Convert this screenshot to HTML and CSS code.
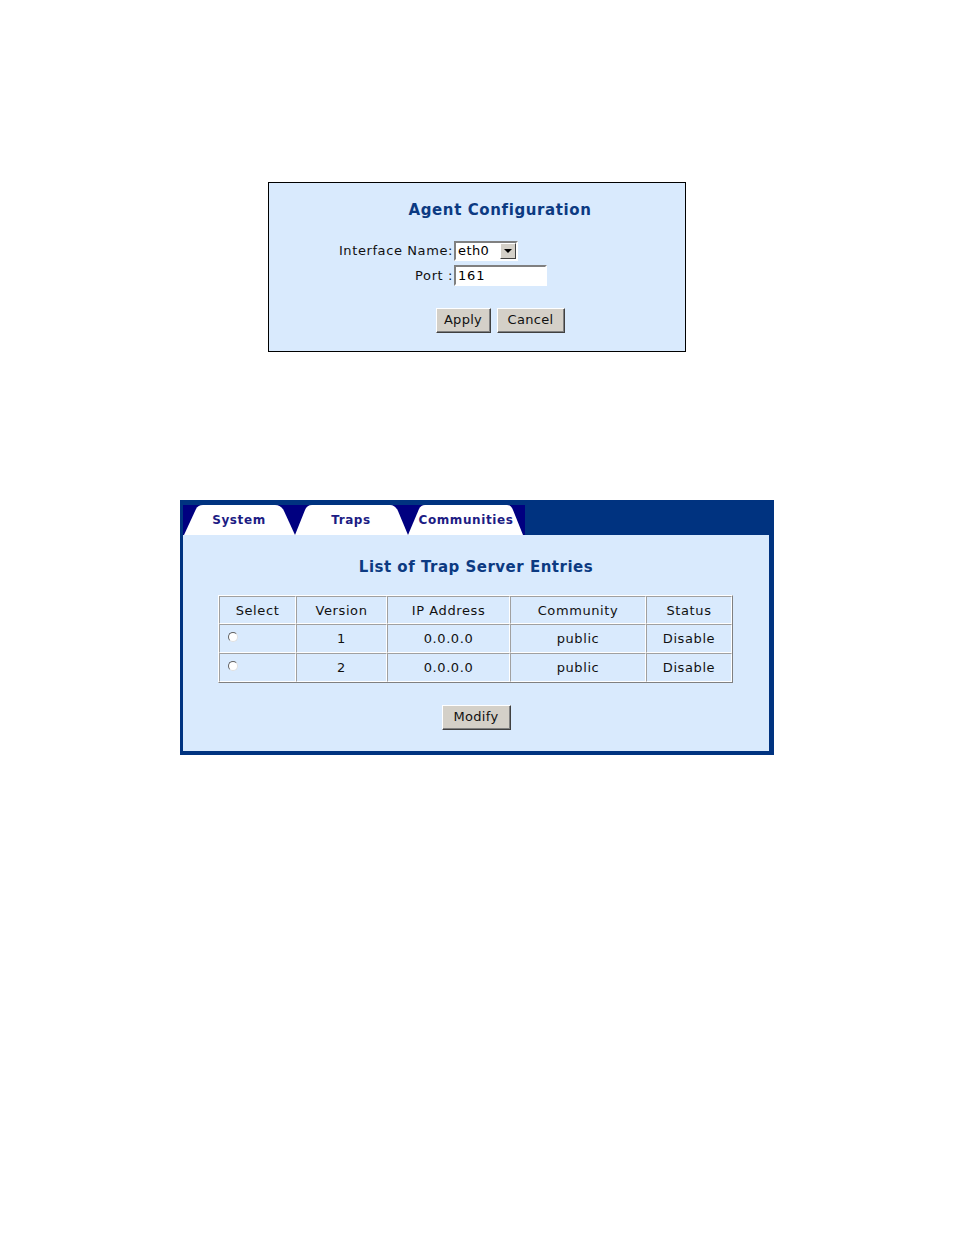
FILE: index.html
```html
<!DOCTYPE html>
<html>
<head>
<meta charset="utf-8">
<link rel="stylesheet" href="styles.css">
</head>
<body>
<div class="agent">
  <div class="agent-inner">
    <div class="agent-title">Agent Configuration</div>
    <div class="form-grid">
      <div class="lbl">Interface Name:</div>
      <div class="sel"><span class="sel-val">eth0</span><span class="sel-btn"><span class="tri"></span></span></div>
      <div class="lbl">Port :</div>
      <div class="inp">161</div>
    </div>
    <div class="btn-row">
      <div class="btn btn-apply">Apply</div>
      <div class="btn btn-cancel">Cancel</div>
    </div>
  </div>
</div>

<div class="frame">
  <div class="tabbar">
    <svg class="tabs" width="342" height="30" viewBox="0 0 342 30">
      <rect x="0" y="0" width="342" height="30" fill="#000080"/>
      <path d="M1,30 L13,4 Q15,0 20,0 L92,0 Q98,0 101,6 L112,30 Z" fill="#ffffff"/>
      <path d="M112,30 L122,5 Q124,0 129,0 L207,0 Q212,0 215,6 L225,30 Z" fill="#ffffff"/>
      <path d="M225,30 L236,4 Q238,0 242,0 L324,0 Q328,0 330,5 L340,30 Z" fill="#ffffff"/>
      <text class="tab-text" x="56" y="19" text-anchor="middle">System</text>
      <text class="tab-text" x="168" y="19" text-anchor="middle">Traps</text>
      <text class="tab-text" x="283" y="19" text-anchor="middle">Communities</text>
    </svg>
  </div>
  <div class="content">
    <div class="list-title">List of Trap Server Entries</div>
    <table class="grid">
      <tr>
        <th class="c1">Select</th><th class="c2">Version</th><th class="c3">IP Address</th><th class="c4">Community</th><th class="c5">Status</th>
      </tr>
      <tr>
        <td class="radio-cell"><span class="radio"></span></td><td>1</td><td>0.0.0.0</td><td>public</td><td>Disable</td>
      </tr>
      <tr>
        <td class="radio-cell"><span class="radio"></span></td><td>2</td><td>0.0.0.0</td><td>public</td><td>Disable</td>
      </tr>
    </table>
    <div class="modify-row"><div class="btn btn-modify">Modify</div></div>
  </div>
</div>
</body>
</html>
```

FILE: styles.css
```css
html, body {
  margin: 0;
  padding: 0;
  background: #ffffff;
}
body {
  font-family: "DejaVu Sans", Verdana, sans-serif;
  font-size: 13px;
  color: #000;
  padding-top: 182px;
  padding-bottom: 100px;
}

/* ---------- Agent Configuration ---------- */
.agent {
  margin-left: 268px;
  width: 416px;
  height: 168px;
  border: 1px solid #000;
  background: #d9eafd;
  box-sizing: content-box;
}
.agent-inner {
  margin-left: 60px;
  width: 342px;
}
.agent-title {
  font-weight: bold;
  font-size: 15px;
  letter-spacing: 0.6px;
  color: #0c3a82;
  text-align: center;
  padding-top: 18px;
  height: 18px;
  line-height: 18px;
}
.form-grid {
  display: grid;
  grid-template-columns: 125px auto;
  row-gap: 4px;
  margin-top: 22px;
  align-items: center;
}
.lbl {
  text-align: right;
  white-space: nowrap;
  font-size: 13px;
  line-height: 20px;
  padding-right: 1px;
  letter-spacing: 0.6px;
  color: #111;
}
.sel {
  width: 64px;
  height: 20px;
  box-sizing: border-box;
  border: 2px solid;
  border-color: #808080 #ffffff #ffffff #808080;
  background: #fff;
  display: flex;
  align-items: stretch;
  outline: 1px solid #d9eafd;
}
.sel-val {
  flex: 1;
  line-height: 16px;
  padding-left: 2px;
  font-size: 13px;
  letter-spacing: 0.4px;
}
.sel-btn {
  width: 16px;
  background: #d4d0c8;
  box-sizing: border-box;
  border: 1px solid;
  border-color: #ffffff #404040 #404040 #ffffff;
  display: flex;
  align-items: center;
  justify-content: center;
}
.tri {
  width: 0;
  height: 0;
  border-left: 4px solid transparent;
  border-right: 4px solid transparent;
  border-top: 4px solid #000;
}
.inp {
  width: 93px;
  height: 21px;
  box-sizing: border-box;
  border: 2px solid;
  border-color: #808080 #ffffff #ffffff #808080;
  background: #fff;
  line-height: 17px;
  padding-left: 2px;
  font-size: 13px;
  letter-spacing: 0.8px;
}
.btn-row {
  display: flex;
  justify-content: center;
  gap: 6px;
  margin-top: 22px;
}
.btn {
  height: 25px;
  box-sizing: border-box;
  background: #d4d0c8;
  border: 1px solid;
  border-color: #ffffff #404040 #404040 #ffffff;
  box-shadow: inset -1px -1px 0 #808080;
  text-align: center;
  line-height: 22px;
  font-size: 13px;
  letter-spacing: 0.3px;
  color: #111;
}
.btn-apply { width: 55px; }
.btn-cancel { width: 68px; }
.btn-modify { width: 69px; }

/* ---------- Trap server frame ---------- */
.frame {
  margin-top: 148px;
  margin-left: 180px;
  width: 594px;
  box-sizing: border-box;
  background: #003380;
  padding: 5px 5px 4px 3px;
}
.tabbar {
  height: 30px;
  display: flex;
}
.tabs {
  display: block;
}
.tab-text {
  font-family: "DejaVu Sans", Verdana, sans-serif;
  font-size: 12px;
  font-weight: bold;
  letter-spacing: 0.6px;
  fill: #1c1c84;
}
.content {
  background: #d9eafd;
  height: 216px;
  box-sizing: border-box;
  padding-top: 23px;
}
.list-title {
  font-weight: bold;
  font-size: 15px;
  letter-spacing: 0.5px;
  color: #0c3a82;
  text-align: center;
  line-height: 18px;
  height: 18px;
}
.grid {
  margin: 19px 0 0 35px;
  width: 515px;
  border-collapse: separate;
  border-spacing: 0;
  border: 1px solid;
  border-color: #ffffff #808080 #808080 #ffffff;
}
.grid th, .grid td {
  border: 1px solid;
  border-color: #a0a0a0 #ffffff #ffffff #a0a0a0;
  font-weight: normal;
  font-size: 13px;
  letter-spacing: 0.6px;
  text-align: center;
  padding: 0;
  color: #111;
}
.grid th { height: 26px; }
.grid td { height: 27px; }
.c1 { width: 75px; }
.c2 { width: 89px; }
.c3 { width: 121px; }
.c4 { width: 134px; }
.grid td.radio-cell {
  text-align: left;
  padding-left: 8px;
  vertical-align: top;
  padding-top: 7px;
  height: 20px;
}
.radio {
  display: block;
  width: 10px;
  height: 10px;
  border-radius: 50%;
  background: #fff;
  border: 1px solid #808080;
  border-color: #606060 #e0e0e0 #e0e0e0 #606060;
  box-sizing: border-box;
}
.modify-row {
  display: flex;
  justify-content: center;
  margin-top: 22px;
}
```
